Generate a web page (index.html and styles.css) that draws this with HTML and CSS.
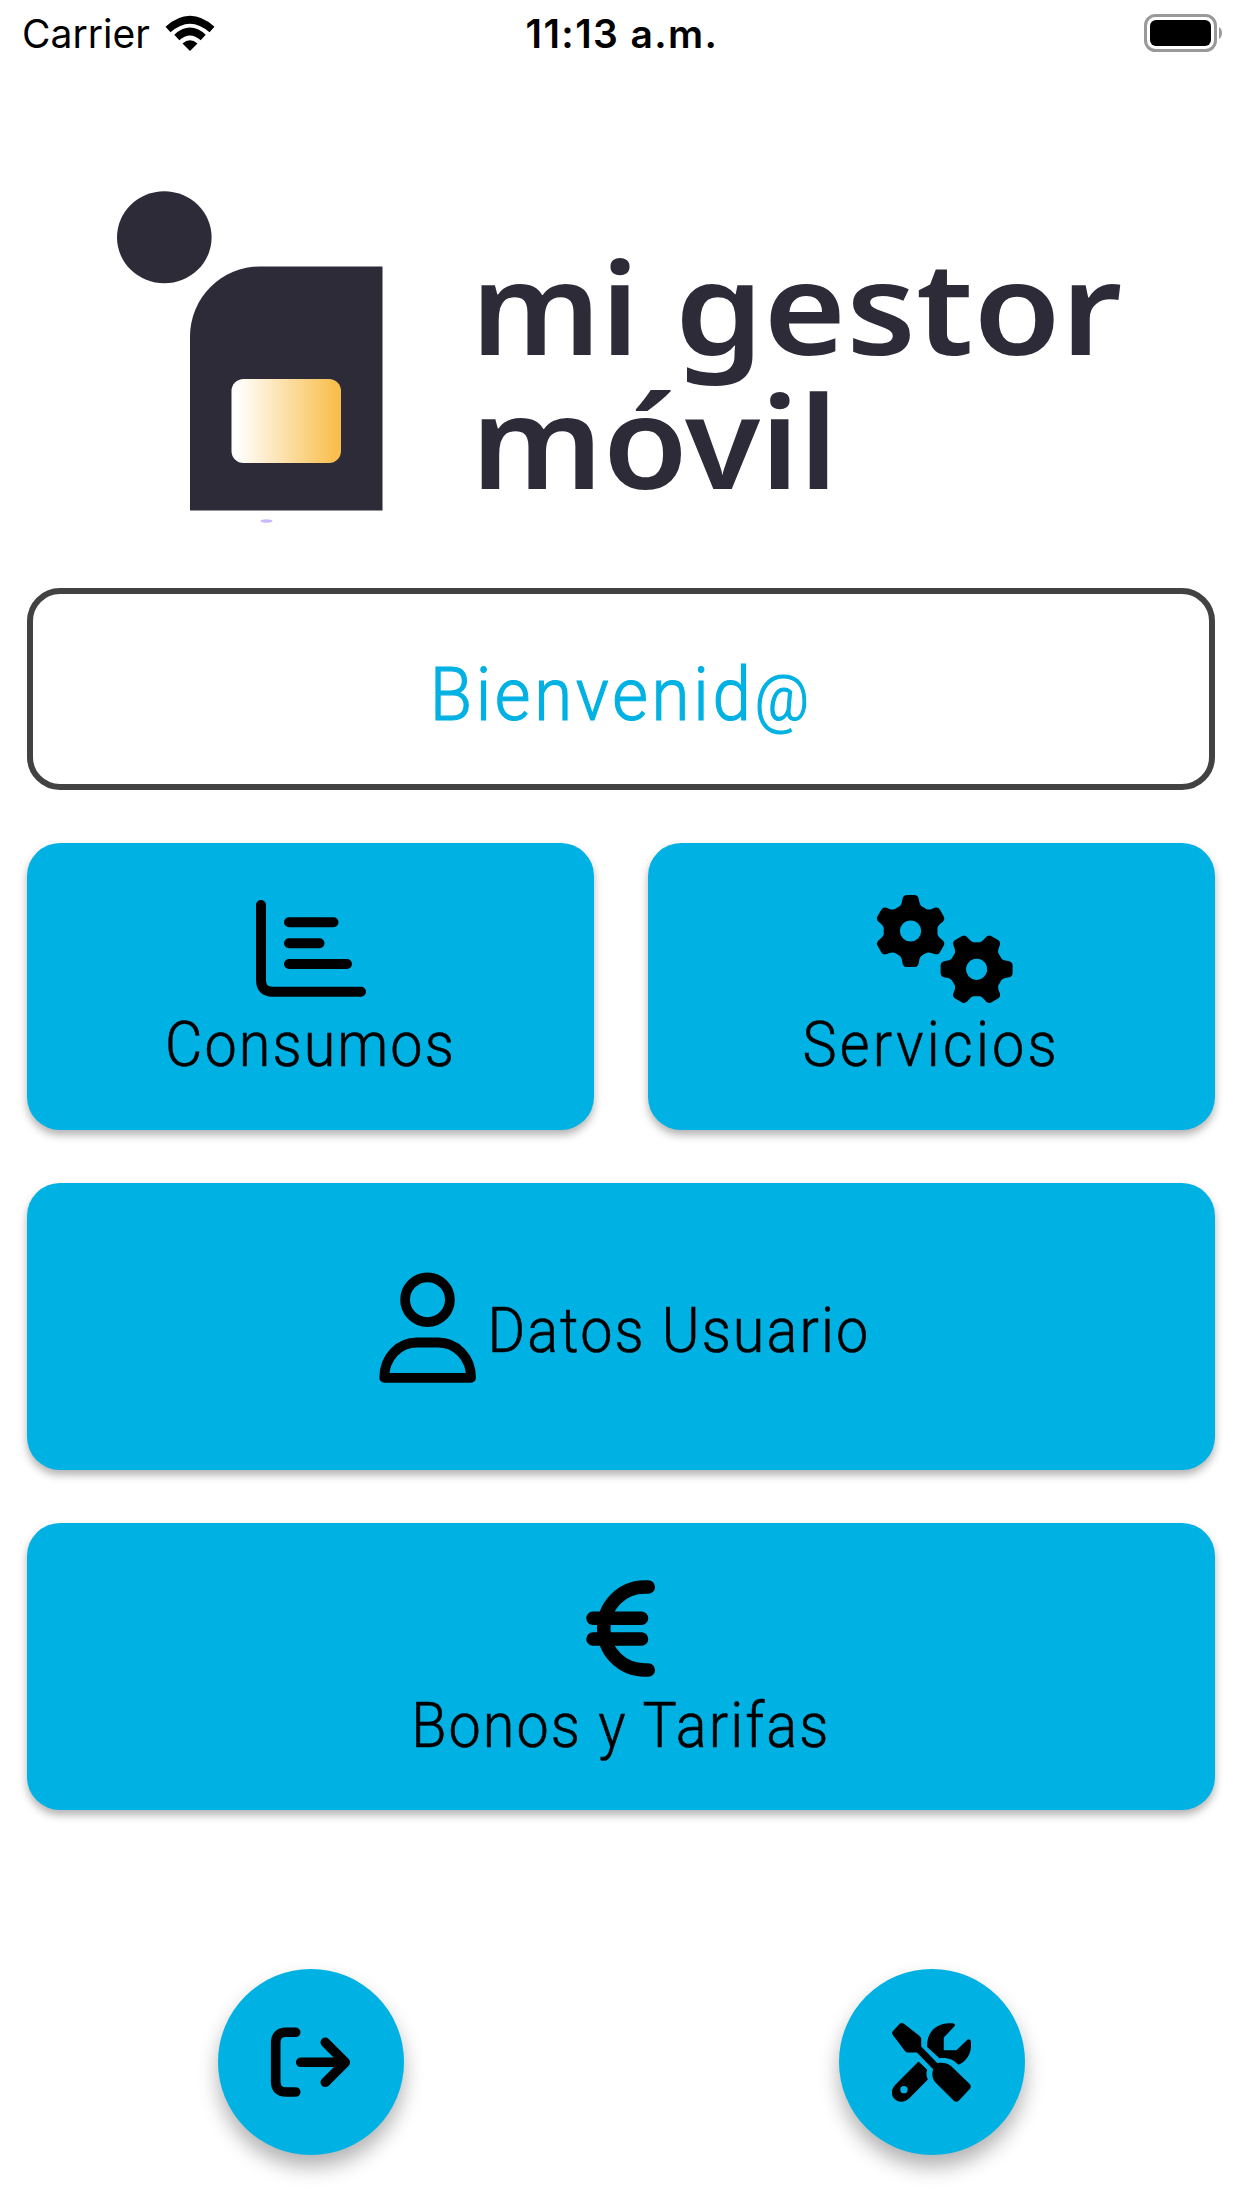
FILE: index.html
```html
<!DOCTYPE html>
<html lang="es">
<head>
  <meta charset="UTF-8" />
  <meta name="viewport" content="width=device-width, initial-scale=1.0" />
  <title>Mi Gestor Móvil</title>
  <link rel="stylesheet" href="styles.css">
</head>
<body>
  <header class="status-bar">
    <div class="carrier">
      <span class="carrier-name">Carrier</span>
      <svg class="wifi" viewBox="0 0 50 36">
        <path d="M3 14.500Q25 -5 47 14.500M11.800 22.500Q25 10.500 38.200 22.500" fill="none" stroke="#000" stroke-width="7.500" />
        <path d="M25 36L17.500 28.500Q25 22 32.500 28.500Z" />
      </svg>
    </div>
    <span class="time">11:13 a.m.</span>
    <svg class="battery" viewBox="0 0 78 38">
      <rect x="1.500" y="1.500" width="70" height="35" rx="10" fill="none" stroke="#999" stroke-width="3" />
      <rect x="6" y="6" width="61" height="26" rx="6" />
      <path d="M75 13q3 2 3 6t-3 6z" fill="#999" />
    </svg>
  </header>

  <svg class="logo" viewBox="0 0 1242 460" role="img" aria-label="mi gestor móvil">
    <defs>
      <linearGradient id="chip">
        <stop offset="0.05" stop-color="#fff" />
        <stop offset="0.95" stop-color="#f9bf4e" />
      </linearGradient>
    </defs>
    <g fill="#2e2b38">
      <ellipse cx="164.300" cy="171.300" rx="47.300" ry="46" />
      <path d="M190 444.500V270.500A70 70 0 0 1 260 200.500H382.500V444.500Z" />
      <text x="471" y="289" textLength="168" lengthAdjust="spacingAndGlyphs">mi</text>
      <text x="675" y="289" textLength="447" lengthAdjust="spacingAndGlyphs">gestor</text>
      <text x="471" y="423" textLength="367" lengthAdjust="spacingAndGlyphs">móvil</text>
    </g>
    <rect x="231.500" y="313" width="109.500" height="84" rx="12" fill="url(#chip)" />
    <ellipse cx="266.500" cy="455" rx="6" ry="1.800" fill="#cbb8fa" />
  </svg>

  <main class="content">
    <div class="welcome"><span class="welcome-text">Bienvenid<span class="at">@</span></span></div>

    <div class="cards">
      <div class="card">
        <svg class="icon-chart" viewBox="256 899 111 98" fill="none" stroke="#000" stroke-width="10" stroke-linecap="round" stroke-linejoin="round">
          <path d="M261 905V980Q261 991.700 272.500 991.700H361M289 922.300H333.500M289 943.300H319.500M289 964H347" />
        </svg>
        <span class="label">Consumos</span>
      </div>
      <div class="card">
        <svg class="icon-gears" viewBox="876 894 138 111">
          <defs>
            <path id="tooth" d="M-14 -22Q-9 -25 -8.500 -30Q-8 -36 -4 -36H4Q8 -36 8.500 -30Q9 -25 14 -22Z" />
            <g id="gear">
              <circle r="18.800" fill="none" stroke="#000" stroke-width="16.400" />
              <use href="#tooth" />
              <use href="#tooth" transform="rotate(60)" />
              <use href="#tooth" transform="rotate(120)" />
              <use href="#tooth" transform="rotate(180)" />
              <use href="#tooth" transform="rotate(240)" />
              <use href="#tooth" transform="rotate(300)" />
            </g>
          </defs>
          <use href="#gear" transform="translate(910.600 931)" />
          <use href="#gear" transform="translate(976.600 969.300) rotate(30)" />
        </svg>
        <span class="label label-servicios">Servicios</span>
      </div>
      <div class="card card-wide card-row">
        <svg class="icon-user" viewBox="379 1272 98 112" fill="none" stroke="#000" stroke-width="9.800" stroke-linejoin="round">
          <circle cx="427.500" cy="1299.700" r="22.400" />
          <path d="M384.300 1377.800H471C471 1357 456 1342.500 438 1342.500H417C399 1342.500 384.300 1357 384.300 1377.800Z" />
        </svg>
        <span class="label label-datos">Datos Usuario</span>
      </div>
      <div class="card card-wide">
        <svg class="icon-euro" viewBox="586 1580 70 98" fill="none" stroke="#000" stroke-width="13.500" stroke-linecap="round">
          <path d="M648.300 1587H645C622 1587 603.700 1605 603.700 1628.500S622 1670 645 1670H648.300M593 1618.200H641.500M593 1639H641.500" />
        </svg>
        <span class="label">Bonos y Tarifas</span>
      </div>
    </div>
  </main>

  <footer class="actions">
    <div class="fab">
      <svg class="icon-exit" viewBox="270 2027 81 71" fill="none" stroke="#000" stroke-width="9.600" stroke-linecap="round" stroke-linejoin="round">
        <path d="M295.700 2032.300H286Q275.700 2032.300 275.700 2043V2081.500Q275.700 2092 286 2092H295.700M300.700 2062.300H345.300M325.300 2042.300L345.300 2062.300L325.300 2082.300" />
      </svg>
    </div>
    <div class="fab">
      <svg class="icon-tools" viewBox="216 218 238 238">
        <path d="M239 220Q245 216 252 220L299 257Q304 261 304 267V289L353 339C367 336 382 338 393 347L450 402Q456 409 451 416L417 452Q410 458 403 453L347 397C337 386 335 371 340 357L291 307H264Q259 307 255 302L219 255Q214 248 219 242Z" />
        <path d="M322 290C319 247 350 214 399 219Q409 221 404 228L372 262V300H410L444 268Q453 264 454 275C457 305 443 333 416 344C400 326 382 321 359 324Z" />
        <path fill-rule="evenodd" d="M296 334L322 359Q317 374 324 388L269 444C255 458 235 459 223 446C211 433 214 417 226 404ZM263 419a11 11 0 1 0 -22 0a11 11 0 1 0 22 0Z" />
      </svg>
    </div>
  </footer>
</body>
</html>
```
FILE: styles.css
```css
* { box-sizing: border-box; }
body { font-family: Roboto, "Liberation Sans", sans-serif; background-color: #fff; color: #000; margin: 0; height: 2208px; overflow: hidden; }
svg { display: block; flex: none; }

.status-bar { display: grid; grid-template-columns: 1fr auto 1fr; align-items: center; height: 66px; padding: 0 20px 0 22px; font-family: Inter, sans-serif; }
.carrier { display: flex; align-items: center; gap: 15px; font-size: 39px; }
.wifi { width: 50px; height: 36px; }
.time { font-size: 39px; font-weight: 600; letter-spacing: 1.4px; padding-top: 1px; }
.carrier-name { padding-top: 1px; }
.battery { width: 78px; height: 38px; justify-self: end; }

.logo { width: 1242px; height: 460px; font-family: "Noto Sans", sans-serif; font-size: 128px; font-weight: 600; }

.content { padding: 62px 27px 0 26.5px; }
.welcome { display: flex; align-items: center; justify-content: center; height: 202px; border: 6px solid #424242; border-radius: 33px; color: #00b1e3; font-size: 75px; font-weight: 300; line-height: 88px; padding-top: 13px; }
.welcome-text { letter-spacing: 4px; transform: scaleX(0.92); -webkit-text-stroke: 1.2px; }
.at { font-size: 65px; }

.cards { display: grid; grid-template-columns: 1fr 1fr; gap: 53px 53.5px; margin-top: 53px; }
.card { display: flex; flex-direction: column; align-items: center; height: 287px; padding-top: 52px; background-color: #00b1e3; border-radius: 33px; box-shadow: 0 5px 8px rgba(0,0,0,0.3); }
.card-wide { grid-column: 1 / 3; }
.card-row { flex-direction: row; justify-content: center; padding: 3px 0 0 26px; }
.label { font-size: 63px; font-weight: 300; line-height: 74px; letter-spacing: 2.3px; white-space: nowrap; transform: scaleX(0.912); -webkit-text-stroke: 0.6px; }
.label-servicios { letter-spacing: 3.6px; }
.label-datos { margin: 6px 0 0 -8px; }

.icon-chart { width: 111px; height: 98px; margin: 4px 0 11px 2px; }
.icon-gears { width: 138px; height: 111px; margin: -1px 0 3px 27px; }
.icon-user { width: 98px; height: 112px; }
.icon-euro { width: 70px; height: 98px; margin: 5px 0 11px; }

.actions { display: flex; justify-content: space-around; margin-top: 159px; }
.fab { display: flex; align-items: center; justify-content: center; width: 186px; height: 186px; border-radius: 50%; background-color: #00b1e3; box-shadow: 0 12px 20px rgba(0,0,0,0.3); }
.icon-exit { width: 81px; height: 71px; }
.icon-tools { width: 79px; height: 79px; }
```
